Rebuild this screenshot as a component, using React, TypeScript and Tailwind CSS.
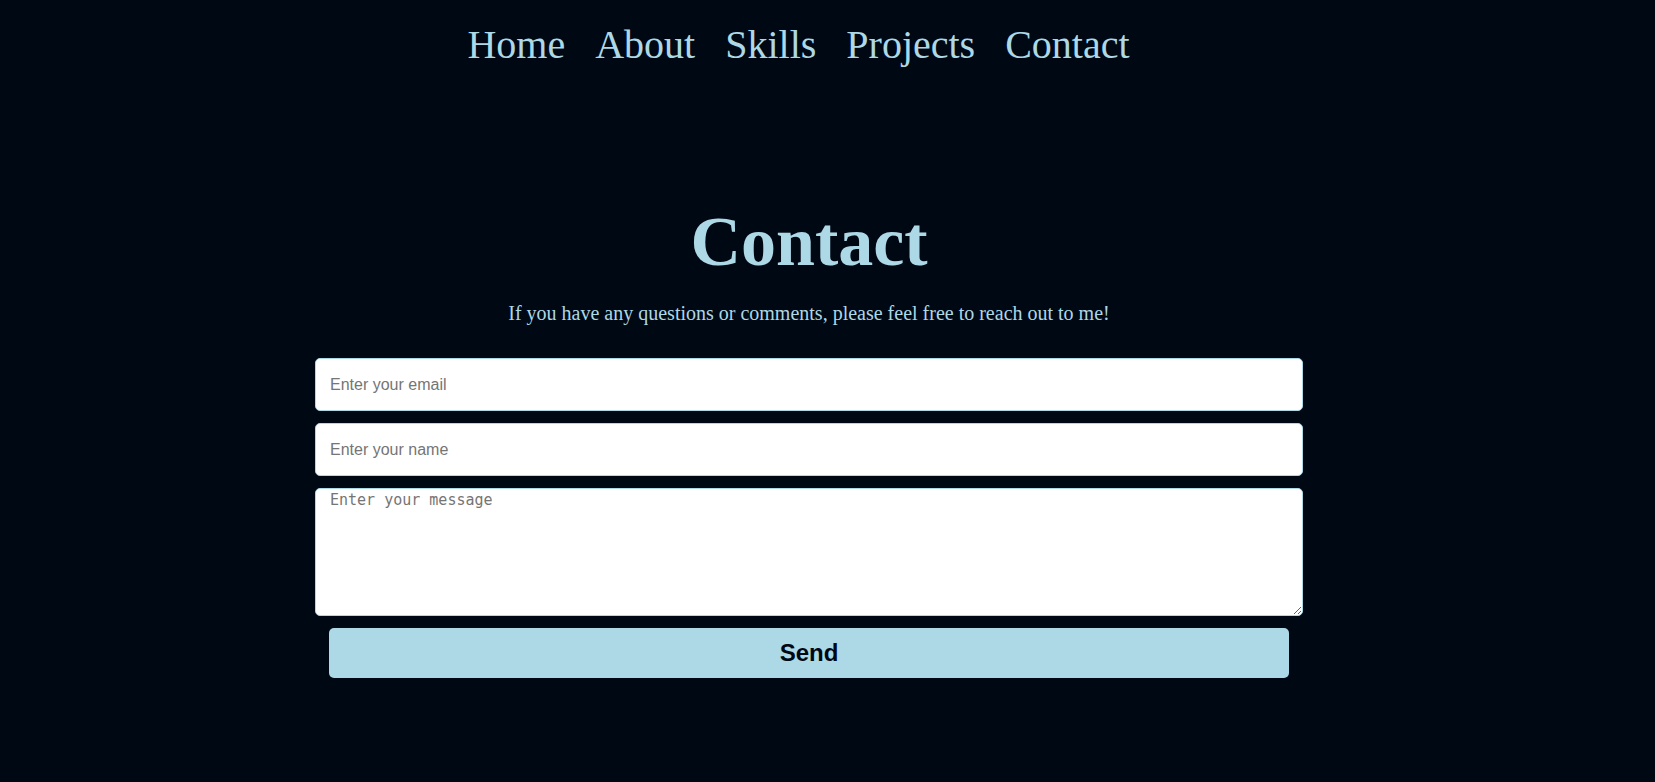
import React, { useState } from "react";

const links = ["Home", "About", "Skills", "Projects", "Contact"];

export default function App() {
    const [email, setEmail] = useState("");
    const [name, setName] = useState("");
    const [message, setMessage] = useState("");

    return (
        <div className="min-h-[782px] w-full bg-[#000814] text-[#add8e6]">
            <div className="w-[1618px] flex flex-col items-center">
                <nav className="flex gap-[30px] pt-[22px] pr-[21px] font-['Liberation_Serif',serif] text-[40px] leading-[46px]">
                    {links.map((link) => (
                        <a key={link} href="#" className="text-[#add8e6]">
                            {link}
                        </a>
                    ))}
                </nav>

                <h1 className="mt-[134px] font-['Liberation_Serif',serif] font-bold text-[70px] leading-[80px]">
                    Contact
                </h1>
                <p className="mt-[20px] font-['Liberation_Serif',serif] text-[20px] leading-[23px]">
                    If you have any questions or comments, please feel free to reach out to me!
                </p>

                <form
                    className="mt-[33px] w-[960px] flex flex-col items-center gap-[12px]"
                    onSubmit={(e) => e.preventDefault()}
                >
                    <input
                        type="email"
                        placeholder="Enter your email"
                        value={email}
                        onChange={(e) => setEmail(e.target.value)}
                        className="w-[988px] h-[53px] shrink-0 px-[14px] rounded-[5px] border border-[#add8e6] bg-white text-black font-['Liberation_Sans',Arial,sans-serif] text-[16px] placeholder:text-[#757575] outline-none"
                    />
                    <input
                        type="text"
                        placeholder="Enter your name"
                        value={name}
                        onChange={(e) => setName(e.target.value)}
                        className="w-[988px] h-[53px] shrink-0 px-[14px] rounded-[5px] border border-[#add8e6] bg-white text-black font-['Liberation_Sans',Arial,sans-serif] text-[16px] placeholder:text-[#757575] outline-none"
                    />
                    <textarea
                        placeholder="Enter your message"
                        value={message}
                        onChange={(e) => setMessage(e.target.value)}
                        className="w-[988px] h-[128px] shrink-0 px-[14px] pt-[1px] rounded-[5px] border border-[#add8e6] bg-white text-black font-['DejaVu_Sans_Mono',monospace] text-[15px] leading-[20px] placeholder:text-[#757575] outline-none"
                    />
                    <button
                        type="submit"
                        className="w-[960px] h-[50px] rounded-[5px] bg-[#add8e6] text-[#000814] font-['Liberation_Sans',Arial,sans-serif] font-bold text-[24px]"
                    >
                        Send
                    </button>
                </form>
            </div>
        </div>
    );
}
